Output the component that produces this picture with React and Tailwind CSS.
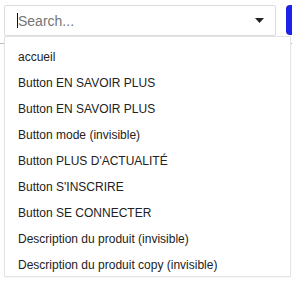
const ITEMS = [
  "accueil",
  "Button EN SAVOIR PLUS",
  "Button EN SAVOIR PLUS",
  "Button mode (invisible)",
  "Button PLUS D'ACTUALITÉ",
  "Button S'INSCRIRE",
  "Button SE CONNECTER",
  "Description du produit (invisible)",
  "Description du produit copy (invisible)",
];

export default function App() {
  return (
    <div className="relative w-[292px] h-[288px] bg-white overflow-hidden" style={{ fontFamily: '"Liberation Sans", Arial, sans-serif' }}>
      <div className="flex items-start pt-[5px] pl-[4px]">
        <div className="flex items-center w-[275px] h-[31px] border border-[#dcdcdc] rounded-[2px] bg-white pl-[12px] pr-[10px]">
          <span className="w-px h-[15px] bg-[#111]" />
          <span className="flex-1 text-[14px] leading-none text-[#757575]">Search...</span>
          <svg width="9" height="5" viewBox="0 0 9 5" className="mr-[1px]">
            <path d="M0 0 L9 0 L4.5 5 Z" fill="#222" />
          </svg>
        </div>
        <div className="ml-[10px] w-[6px] h-[30px] rounded-l-[4px] bg-[#1c22e6]" />
      </div>
      <div className="mt-[7px] border-t border-[#bdbdbd]" />

      <div className="absolute left-[4px] top-[36px] w-[287px] h-[241px] border border-[#e4e4e4] bg-white overflow-hidden shadow-[0_1px_2px_rgba(0,0,0,0.04)]">
        <ul className="pt-[7px]">
          {ITEMS.map((item, i) => (
            <li key={i} className="pl-[13px] py-[6px] text-[12px] leading-[14px] text-[#222] whitespace-nowrap">
              {item}
            </li>
          ))}
        </ul>
      </div>
    </div>
  );
}
